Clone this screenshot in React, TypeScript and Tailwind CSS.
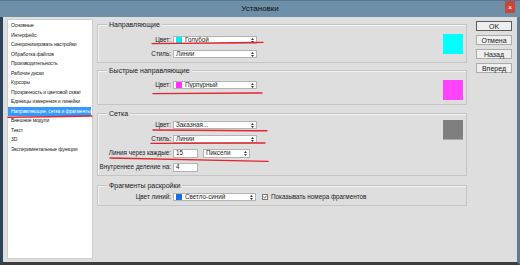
import React from 'react';

const listItems = [
  'Основные',
  'Интерфейс',
  'Синхронизировать настройки',
  'Обработка файлов',
  'Производительность',
  'Рабочие диски',
  'Курсоры',
  'Прозрачность и цветовой охват',
  'Единицы измерения и линейки',
  'Направляющие, сетка и фрагменты',
  'Внешние модули',
  'Текст',
  '3D',
  'Экспериментальные функции',
];

const Arrows = () => (
  <svg width="3" height="5" viewBox="0 0 3 5" className="shrink-0">
    <path d="M1.5 0 L3 2 H0 Z M0 3 H3 L1.5 5 Z" fill="#3a3a3a" />
  </svg>
);

interface SelectProps {
  w: string;
  h?: string;
  swatch?: string;
  text: string;
}

const Select = ({ w, h = 'h-[8px]', swatch, text }: SelectProps) => (
  <div className={`flex items-center bg-white border border-[#b3b3b3] pl-[2px] pr-[2px] ${w} ${h}`}>
    {swatch && <span className={`w-[6px] h-[6px] mr-[3px] shrink-0 ${swatch}`} />}
    <span className="flex-1 leading-none whitespace-nowrap overflow-hidden">{text}</span>
    <Arrows />
  </div>
);

const Row = ({ label, children }: { label: string; children: React.ReactNode }) => (
  <div className="flex items-center">
    <span className="w-[75px] pr-[2px] text-right whitespace-nowrap leading-none">{label}</span>
    {children}
  </div>
);

const Group = ({ title, className, children }: { title: string; className: string; children: React.ReactNode }) => (
  <div className={`relative flex border border-[#c4c4c4] shadow-[inset_1px_1px_0_#f3f3f3] ${className}`}>
    <span className="absolute left-[9px] top-[-5px] px-[2px] bg-[#dedede] text-[7px] leading-[9px] whitespace-nowrap">
      {title}
    </span>
    {children}
  </div>
);

export default function App() {
  return (
    <div className="relative w-[520px] h-[265px] overflow-hidden bg-[#dedede] text-[#1b1b1b] text-[6.3px] font-['Liberation_Sans',Arial,sans-serif]">
      {/* Title bar */}
      <div className="relative h-[17px] bg-[#6d8fa8] flex items-center justify-center border-t border-t-[#56768e]">
        <span className="text-[8px] text-[#101010]">Установки</span>
        <div className="absolute right-[5px] top-0 w-[10px] h-[12px] bg-[#c9463a] flex items-center justify-center text-white text-[7px] leading-none">
          ×
        </div>
      </div>

      <div className="flex h-[248px] border-l-[3px] border-l-[#2b4459] border-r-[3px] border-r-[#5d7c94] border-b-[3px] border-b-[#3d3d3d]">
        {/* Category list */}
        <div className="ml-[4px] mt-[2px] w-[86px] h-[240px] bg-white border border-[#cfcfcf] pt-[1px] text-[5px] tracking-[-0.12px]">
          {listItems.map((item, i) => (
            <div
              key={item}
              className={`h-[9.5px] leading-[9.5px] pl-[3px] mr-[1px] whitespace-nowrap overflow-hidden ${
                i === 9 ? 'bg-[#3399ff] text-white' : 'text-[#222]'
              }`}
            >
              {item}
            </div>
          ))}
        </div>

        {/* Settings */}
        <div className="ml-[4px] mt-[7px] w-[370px] flex flex-col">
          <Group title="Направляющие" className="">
            <div className="flex flex-col pt-[11px] pb-[4px] gap-[6px]">
              <Row label="Цвет:">
                <Select w="w-[84px]" swatch="bg-[#00f0f0]" text="Голубой" />
              </Row>
              <Row label="Стиль:">
                <Select w="w-[84px]" text="Линии" />
              </Row>
            </div>
            <div className="ml-auto mr-[3px] mt-[9px] w-[20px] h-[20px] bg-[#00ffff]" />
          </Group>

          <Group title="Быстрые направляющие" className="mt-[7px]">
            <div className="flex flex-col pt-[10px] pb-[15px]">
              <Row label="Цвет:">
                <Select w="w-[84px]" swatch="bg-[#ff33ff]" text="Пурпурный" />
              </Row>
            </div>
            <div className="ml-auto mr-[3px] mt-[9px] w-[20px] h-[20px] bg-[#ff44ff]" />
          </Group>

          <Group title="Сетка" className="mt-[8px]">
            <div className="flex flex-col pt-[7px] pb-[3px]">
              <Row label="Цвет:">
                <Select w="w-[84px]" text="Заказная..." />
              </Row>
              <div className="mt-[6px]">
                <Row label="Стиль:">
                  <Select w="w-[84px]" text="Линии" />
                </Row>
              </div>
              <div className="mt-[6px]">
                <Row label="Линия через каждые:">
                  <div className="w-[25px] h-[9px] bg-white border border-[#b3b3b3] pl-[2px] flex items-center leading-none">15</div>
                  <div className="ml-[5px]">
                    <Select w="w-[47px]" h="h-[9px]" text="Пиксели" />
                  </div>
                </Row>
              </div>
              <div className="mt-[5px]">
                <Row label="Внутреннее деление на:">
                  <div className="w-[25px] h-[9px] bg-white border border-[#b3b3b3] pl-[2px] flex items-center leading-none">4</div>
                </Row>
              </div>
            </div>
            <div className="ml-auto mr-[3px] mt-[6px] w-[20px] h-[20px] bg-[#7f7f7f] border-b border-b-[#a8a8a8]" />
          </Group>

          <Group title="Фрагменты раскройки" className="mt-[9px]">
            <div className="flex flex-col pt-[7px] pb-[4px]">
              <Row label="Цвет линий:">
                <Select w="w-[83px]" swatch="bg-[#1a6fe0]" text="Светло-синий" />
                <div className="ml-[6px] w-[6px] h-[6px] bg-white border border-[#7a7a7a] flex items-center justify-center">
                  <svg width="5" height="4" viewBox="0 0 5 4">
                    <path d="M0.5 2 L2 3.4 L4.6 0.4" stroke="#222" strokeWidth="0.9" fill="none" />
                  </svg>
                </div>
                <span className="ml-[3px] whitespace-nowrap leading-none">Показывать номера фрагментов</span>
              </Row>
            </div>
          </Group>
        </div>

        {/* Buttons */}
        <div className="ml-[9px] mt-[4px] w-[36px] flex flex-col gap-[4px] text-[7px]">
          <div className="h-[10px] border border-[#5b5b5b] bg-[#efefef] flex items-center justify-center leading-none">OK</div>
          <div className="h-[10px] border border-[#ababab] bg-[#efefef] flex items-center justify-center leading-none">Отмена</div>
          <div className="h-[10px] border border-[#ababab] bg-[#efefef] flex items-center justify-center leading-none">Назад</div>
          <div className="h-[10px] border border-[#ababab] bg-[#efefef] flex items-center justify-center leading-none">Вперед</div>
        </div>
      </div>

      {/* Red annotation strokes */}
      <svg className="absolute inset-0 pointer-events-none" width="520" height="265" viewBox="0 0 520 265">
        <g stroke="#e4252b" strokeWidth="1.4" fill="none" strokeLinecap="round">
          <path d="M152 43.6 Q210 43 263 42.4" />
          <path d="M153 93.6 Q210 93.4 262 93" />
          <path d="M8 117.2 Q50 116.8 92 116" />
          <path d="M153 130 Q210 130.2 267 130.8" />
          <path d="M151 143.4 Q210 143.3 265 143" />
          <path d="M110 158 Q190 160 268 161.4" />
        </g>
      </svg>
    </div>
  );
}
